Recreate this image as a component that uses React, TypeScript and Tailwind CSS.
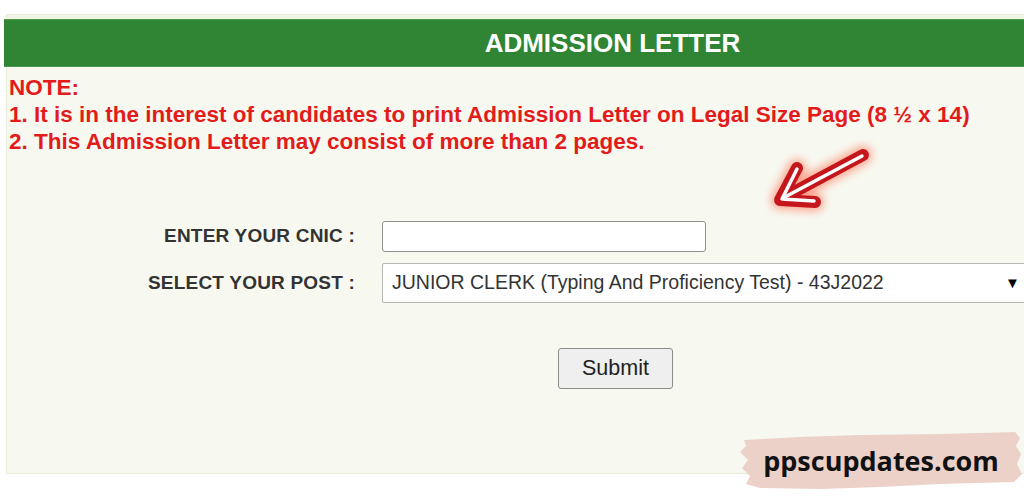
const notes = [
  '1. It is in the interest of candidates to print Admission Letter on Legal Size Page (8 ½ x 14)',
  '2. This Admission Letter may consist of more than 2 pages.',
];

export default function App() {
  return (
    <div className="relative h-[497px] w-[1024px] overflow-hidden bg-white font-['Liberation_Sans',Arial,sans-serif]">
      <div className="pt-[14px] pl-[6px]">
        <div className="w-[1216px] h-[460px] border border-[#e8eddc] bg-[#f7f9f1]">
          <div className="h-[4px] bg-[#eef5e4]" />
          <div className="-ml-[3px] flex h-[48px] items-center justify-center bg-[#2f8534] border-y border-[#4d9a4f]">
            <h1 className="text-[26px] font-bold text-white">ADMISSION LETTER</h1>
          </div>

          <div className="pl-[2px] pt-[7px] text-[22.5px] font-bold leading-[27px] text-[#e31b1b]">
            <p>NOTE:</p>
            {notes.map((n) => (
              <p key={n}>{n}</p>
            ))}
          </div>

          <div className="mt-[66px] flex flex-col gap-[11px]">
            <div className="flex items-center">
              <label className="w-[348px] text-right text-[19px] font-bold text-[#333] tracking-[0.2px]">ENTER YOUR CNIC :</label>
              <input className="ml-[27px] h-[31px] w-[324px] rounded-[3px] border border-[#8f8f8f] bg-white" />
            </div>
            <div className="relative flex items-center">
              <label className="w-[348px] text-right text-[19px] font-bold text-[#333] tracking-[0.2px]">SELECT YOUR POST :</label>
              <div className="ml-[27px] flex h-[40px] w-[660px] items-center rounded-[2px] border border-[#b5b5b5] bg-white pl-[9px] pr-[10px] text-[19.5px] text-[#333]">
                <span>JUNIOR CLERK (Typing And Proficiency Test) - 43J2022</span>
              </div>
              <span className="absolute left-[998px] top-[12px] text-[15px] leading-none text-black">▼</span>
            </div>
          </div>

          <div className="mt-[45px] ml-[551px]">
            <button className="h-[41px] w-[115px] rounded-[3px] border border-[#8c8c8c] bg-[#efefef] text-[21.5px] text-[#222]">
              Submit
            </button>
          </div>
        </div>
      </div>

      <svg className="absolute left-[760px] top-[140px]" width="120" height="80" viewBox="0 0 120 80" aria-hidden="true">
        <defs>
          <filter id="glow" x="-40%" y="-40%" width="180%" height="180%">
            <feGaussianBlur stdDeviation="5" />
          </filter>
        </defs>
        <g stroke="#ff6a4a" strokeWidth="18" fill="none" strokeLinecap="round" strokeLinejoin="round" filter="url(#glow)" opacity="0.6">
          <path d="M103 15 L21 59" />
          <path d="M37 28 L20 60 L55 62" />
        </g>
        <g stroke="#c4161b" strokeWidth="12" fill="none" strokeLinecap="round" strokeLinejoin="round">
          <path d="M103 15 L21 59" />
          <path d="M37 28 L20 60 L55 62" />
        </g>
        <g stroke="#ffffff" strokeWidth="3.5" fill="none" strokeLinecap="round" strokeLinejoin="round">
          <path d="M102 16 L23 58" />
          <path d="M37 29 L22 59 L54 61" />
        </g>
      </svg>

      <div className="absolute left-[740px] top-[432px] flex h-[58px] w-[282px] items-center justify-center">
        <svg className="absolute inset-0" width="282" height="58" viewBox="0 0 282 58" aria-hidden="true">
          <path
            d="M4 8 L60 5 L120 3 L200 2 L275 0 L280 6 L276 14 L281 22 L277 32 L282 42 L274 50 L200 52 L140 55 L80 57 L20 56 L6 52 L10 44 L2 36 L8 28 L0 20 L6 14 Z"
            fill="#ebd1c8"
          />
        </svg>
        <span className="relative font-['Open_Sans',sans-serif] text-[27px] font-bold text-[#111]">ppscupdates.com</span>
      </div>
    </div>
  );
}
